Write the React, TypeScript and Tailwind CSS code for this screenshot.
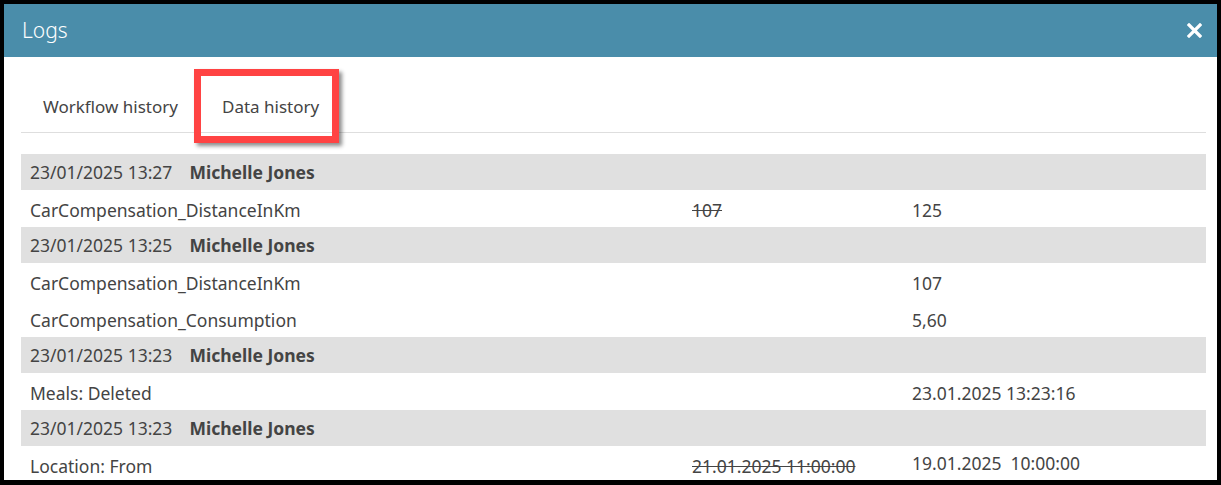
import React from "react";

type Change = { field: string; oldValue?: string; newValue: string; raised?: boolean };
type Entry = { date: string; user: string; changes: Change[] };

const entries: Entry[] = [
  {
    date: "23/01/2025 13:27",
    user: "Michelle Jones",
    changes: [{ field: "CarCompensation_DistanceInKm", oldValue: "107", newValue: "125" }],
  },
  {
    date: "23/01/2025 13:25",
    user: "Michelle Jones",
    changes: [
      { field: "CarCompensation_DistanceInKm", newValue: "107" },
      { field: "CarCompensation_Consumption", newValue: "5,60" },
    ],
  },
  {
    date: "23/01/2025 13:23",
    user: "Michelle Jones",
    changes: [{ field: "Meals: Deleted", newValue: "23.01.2025 13:23:16" }],
  },
  {
    date: "23/01/2025 13:23",
    user: "Michelle Jones",
    changes: [
      { field: "Location: From", oldValue: "21.01.2025 11:00:00", newValue: "19.01.2025  10:00:00", raised: true },
    ],
  },
];

export default function App() {
  return (
    <div className="w-[1221px] h-[485px] bg-black pt-[4px] pl-[4px] pr-[4px] pb-[5px] overflow-hidden font-['Segoe_UI','Noto_Sans',sans-serif] text-[#444]">
      <div className="bg-white h-full flex flex-col overflow-hidden">

        <div className="h-[53px] shrink-0 bg-[#4a8daa] flex items-center justify-between pl-[18px] pr-[15px]">
          <span className="text-white text-[21px] font-light">Logs</span>
          <svg width="15" height="15" viewBox="0 0 15 15" className="-mt-[1px]">
            <path d="M2 2 L13 13 M13 2 L2 13" stroke="white" strokeWidth="3.2" strokeLinecap="square" />
          </svg>
        </div>

        <div className="pl-[17px] pr-[11px]">

          <div className="flex pt-[25px] border-b border-[#dedede]">
            <div className="px-[22px] h-[50px] flex items-center text-[17px]">Workflow history</div>
            <div className="relative pl-[22px] pr-[20px] h-[50px] flex items-center text-[17px]">
              Data history
              <span className="absolute left-[-6px] top-[-13px] w-[145px] h-[74px] border-[7px] border-[#ff4343] shadow-[3px_3px_4px_rgba(0,0,0,0.45)]" />
            </div>
          </div>

          <div className="mt-[21px]">
            {entries.map((e, i) => (
              <div key={i}>
                <div className="h-[36px] bg-[#e0e0e0] flex items-center pl-[9px] text-[17.5px]">
                  <span>{e.date}</span>
                  <span className="ml-[17px] font-bold">{e.user}</span>
                </div>
                {e.changes.map((c, j) => (
                  <div key={j} className="h-[37px] grid grid-cols-[662px_220px_1fr] items-center pl-[9px] pt-[4px] text-[17.5px]">
                    <span>{c.field}</span>
                    <span className="line-through">{c.oldValue}</span>
                    <span className={c.raised ? "whitespace-pre -mt-[6px]" : "whitespace-pre"}>{c.newValue}</span>
                  </div>
                ))}
              </div>
            ))}
          </div>

        </div>
      </div>
    </div>
  );
}
